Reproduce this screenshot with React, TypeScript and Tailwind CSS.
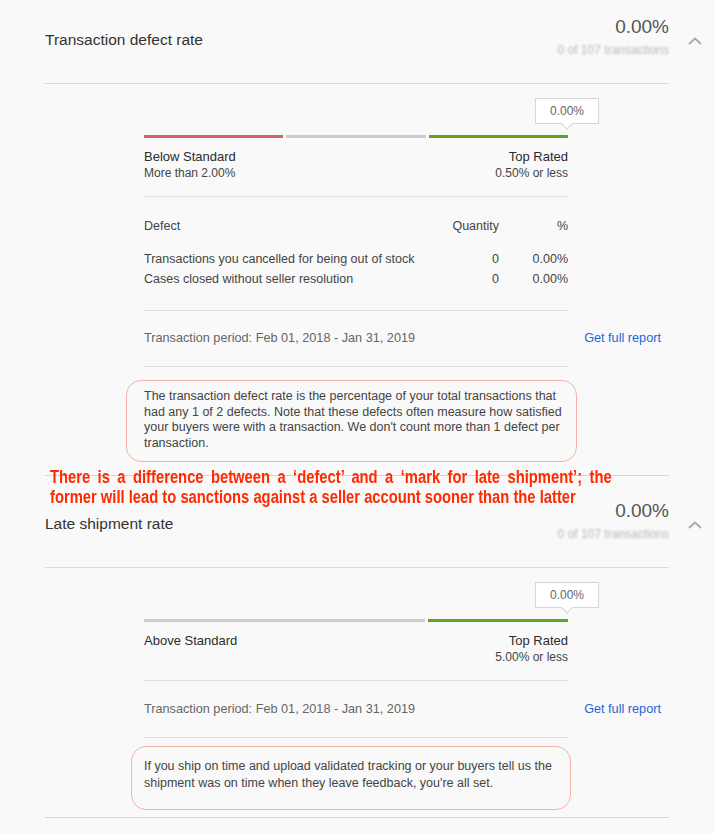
import React from "react";

type Row = { label: string; qty: string; pct: string };

function Chevron() {
  return (
    <svg width="14" height="8" viewBox="0 0 14 8" className="mt-[45px] ml-[19px] shrink-0">
      <polyline points="1,7 7,1.5 13,7" fill="none" stroke="#a8a8a8" strokeWidth="1.8" />
    </svg>
  );
}

function Tooltip() {
  return (
    <div className="flex w-[424px] justify-end">
      <div className="relative mr-[-31px] flex h-[26px] w-[64px] items-center justify-center border border-[#d6d6d6] bg-white text-[12px] text-[#666]">
        0.00%
        <span className="absolute bottom-[-5px] left-[27px] h-[8px] w-[8px] rotate-45 border-r border-b border-[#d6d6d6] bg-white" />
      </div>
    </div>
  );
}

function Section({
  title,
  sub,
  bars,
  leftLabel,
  leftSub,
  rightSub,
  rows,
  note,
  boxClass,
}: {
  title: string;
  sub: string;
  bars: string[];
  leftLabel: string;
  leftSub?: string;
  rightSub: string;
  rows?: Row[];
  note: string;
  boxClass: string;
}) {
  return (
    <section className="ml-[45px] w-[624px] border-b border-[#d4d4d4]">
      {/* header */}
      <div className="flex h-[91px] w-[657px]">
        <div className="flex-1 pt-[39px] text-[15.5px] leading-[18px] text-[#333]">{title}</div>
        <div className="pt-[24px] text-right">
          <div className="text-[19px] leading-[22px] text-[#555]">0.00%</div>
          <div className="mt-[5px] text-[12px] leading-[14px] text-[#b8b8b8] blur-[0.8px]">{sub}</div>
        </div>
        <Chevron />
      </div>
      <div className="h-px bg-[#dcdcdc]" />

      {/* body */}
      <div className="pl-[99px] pt-[14px]">
        <Tooltip />
        <div className="mt-[11px] flex h-[3px] w-[424px] gap-[3px]">
          {bars.map((c, i) => (
            <div key={i} className={`h-full ${c}`} />
          ))}
        </div>

        <div className="mt-[11px] flex w-[424px] justify-between text-[13px] leading-[16px] text-[#333]">
          <div>
            <div className="font-medium text-[#2b2b2b]">{leftLabel}</div>
            {leftSub && <div className="text-[12px] text-[#444]">{leftSub}</div>}
          </div>
          <div className="text-right">
            <div className="font-medium text-[#2b2b2b]">Top Rated</div>
            <div className="text-[12px] text-[#444]">{rightSub}</div>
          </div>
        </div>

        <div className="mt-[15px] h-px w-[424px] bg-[#dedede]" />

        {rows && (
          <>
            <div className="mt-[21px] flex w-[424px] text-[12.5px] leading-[16px] text-[#444]">
              <div className="flex-1">Defect</div>
              <div className="w-[80px] text-right">Quantity</div>
              <div className="w-[69px] text-right">%</div>
            </div>
            <div className="mt-[15px] w-[424px] text-[12.5px] leading-[20px] text-[#444]">
              {rows.map((r) => (
                <div key={r.label} className="flex">
                  <div className="flex-1">{r.label}</div>
                  <div className="w-[80px] text-right">{r.qty}</div>
                  <div className="w-[69px] text-right">{r.pct}</div>
                </div>
              ))}
            </div>
            <div className="mt-[21px] h-px w-[424px] bg-[#dedede]" />
          </>
        )}

        <div className={`flex w-[517px] justify-between text-[12.7px] leading-[16px] ${rows ? "mt-[19px]" : "mt-[20px]"}`}>
          <span className="text-[#666]">Transaction period: Feb 01, 2018 - Jan 31, 2019</span>
          <a className="text-[#1f66d1]">Get full report</a>
        </div>

        <div className="mt-[20px] h-px w-[424px] bg-[#dedede]" />

        <div className={`rounded-[15px] border-[1.5px] border-[#f7b1a4] text-[12.5px] text-[#444] ${boxClass}`}>
          {note}
        </div>
      </div>
    </section>
  );
}

export default function App() {
  return (
    <div className="relative h-[834px] w-[715px] overflow-hidden bg-[#f9f9f9] font-['Liberation_Sans',Arial,sans-serif]">
      <div className="-mt-[8px]">
        <Section
          title="Transaction defect rate"
          sub="0 of 107 transactions"
          bars={["flex-1 bg-[#d16666]", "flex-1 bg-[#cccccc]", "flex-1 bg-[#5ca51f]"]}
          leftLabel="Below Standard"
          leftSub="More than 2.00%"
          rightSub="0.50% or less"
          rows={[
            { label: "Transactions you cancelled for being out of stock", qty: "0", pct: "0.00%" },
            { label: "Cases closed without seller resolution", qty: "0", pct: "0.00%" },
          ]}
          note="The transaction defect rate is the percentage of your total transactions that had any 1 of 2 defects. Note that these defects often measure how satisfied your buyers were with a transaction. We don't count more than 1 defect per transaction."
          boxClass="mt-[13px] mb-[13px] ml-[-18px] w-[451px] h-[82px] pl-[17px] pr-[10px] pt-[8px] leading-[15.5px]"
        />
        <Section
          title="Late shipment rate"
          sub="0 of 107 transactions"
          bars={["flex-[2] bg-[#cccccc]", "flex-1 bg-[#5ca51f]"]}
          leftLabel="Above Standard"
          rightSub="5.00% or less"
          note="If you ship on time and upload validated tracking or your buyers tell us the shipment was on time when they leave feedback, you're all set."
          boxClass="mt-[8px] mb-[7px] ml-[-13px] w-[440px] h-[64px] pl-[12px] pr-[10px] pt-[11px] leading-[17px]"
        />
      </div>

      {/* annotation overlay */}
      <div className="absolute left-[50px] top-[467px] w-[685px] origin-left scale-x-[0.82] text-[18px] font-bold leading-[20px] text-[#ff2a00]">
        <div className="text-justify [text-align-last:justify]">
          There is a difference between a ‘defect’ and a ‘mark for late shipment’; the
        </div>
        <div className="whitespace-nowrap">former will lead to sanctions against a seller account sooner than the latter</div>
      </div>
    </div>
  );
}
